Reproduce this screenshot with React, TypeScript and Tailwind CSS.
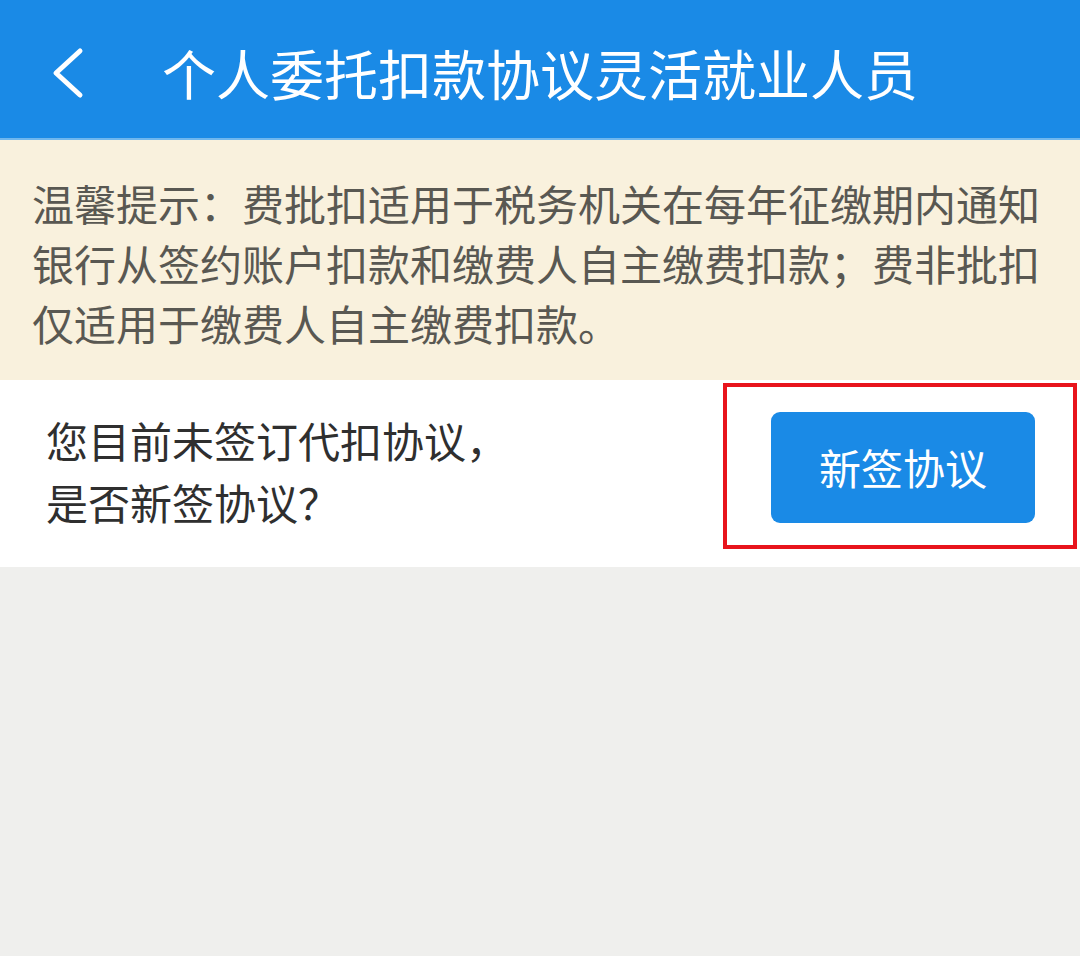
import React from 'react';

const font = { fontFamily: '"Noto Sans CJK SC", "Noto Sans", sans-serif' };

function Header() {
    return (
        <header className="h-[140px] bg-[#1a8ae6] flex items-center border-b-2 border-[#6fb7ee]">
            <div className="w-[162px] pl-[50px] pt-[8px] flex items-center">
                <svg width="36" height="52" viewBox="0 0 36 52" fill="none">
                    <polyline points="30,4 6,26 30,48" stroke="white" strokeWidth="5" strokeLinecap="round" strokeLinejoin="round" />
                </svg>
            </div>
            <h1 className="text-white text-[54px] leading-none font-normal pt-[8px]">个人委托扣款协议灵活就业人员</h1>
        </header>
    );
}

function Notice() {
    return (
        <div className="bg-[#f9f1dd] pl-[32px] pr-[30px] pt-[33px] pb-[27px] text-[42px] leading-[60px] text-[#595852]">
            温馨提示：费批扣适用于税务机关在每年征缴期内通知<br />
            银行从签约账户扣款和缴费人自主缴费扣款；费非批扣<br />
            仅适用于缴费人自主缴费扣款。
        </div>
    );
}

function SignRow() {
    return (
        <div className="relative bg-white flex items-center justify-between pl-[46px] pr-[45px] pt-[21px] pb-[34px]">
            <p className="mt-[8px] text-[42px] leading-[62px] text-[#2f2f2f]">
                您目前未签订代扣协议，<br />
                是否新签协议？
            </p>
            <button className="w-[264px] h-[111px] rounded-[9px] bg-[#1a8ae6] text-white text-[42px] leading-none">
                新签协议
            </button>
            <div className="absolute left-[723px] top-[3px] w-[354px] h-[166px] border-[4px] border-[#e8141c] pointer-events-none" />
        </div>
    );
}

export default function App() {
    return (
        <div className="w-[1080px] h-[956px] bg-[#efefed] overflow-hidden" style={font}>
            <Header />
            <Notice />
            <SignRow />
        </div>
    );
}
